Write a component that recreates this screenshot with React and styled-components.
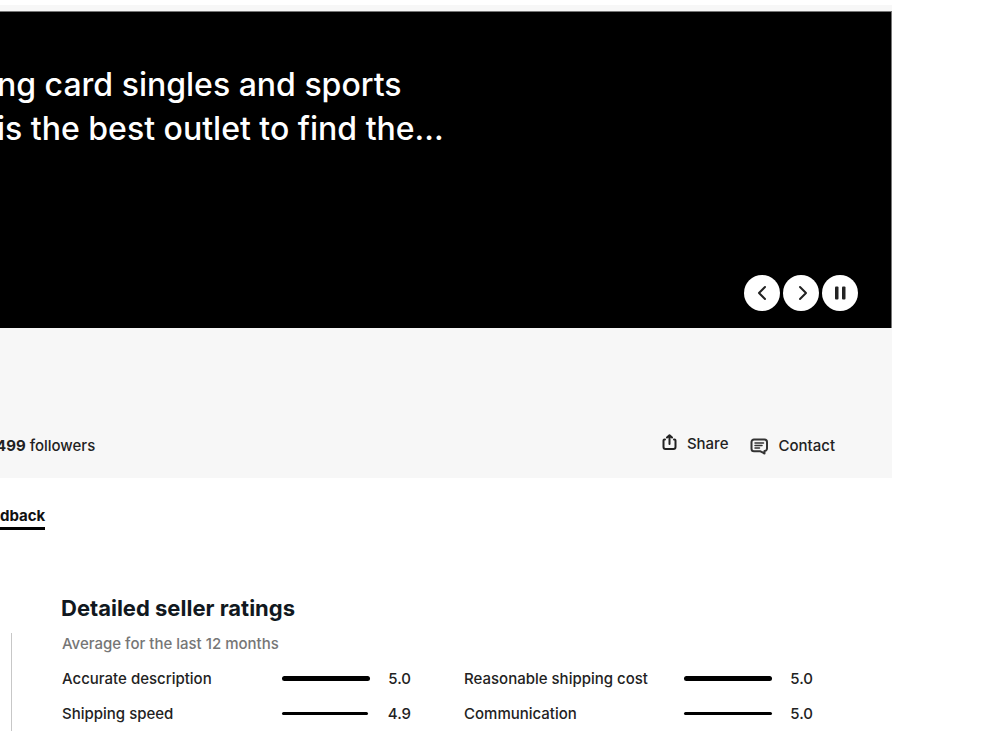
import React from "react";
import styled, { createGlobalStyle } from "styled-components";

const GlobalStyle = createGlobalStyle`
  * { box-sizing: border-box; }
  body {
    margin: 0;
    background: #fff;
    color: #222;
    font-family: Inter, "Liberation Sans", sans-serif;
    font-size: 15px;
    font-weight: 500;
    line-height: 20px;
    overflow-x: hidden;
  }
`;

const Page = styled.main`
  padding: 5px 108px 0 0;
`;

const StoreHeader = styled.header`
  background: #f7f7f7;
  padding-top: 6px;
`;

const Billboard = styled.section`
  display: flex;
  flex-direction: column;
  justify-content: space-between;
  min-height: 317px;
  padding: 51px 33px 17px 0;
  background: #000;
  border-top: 1px solid #777;
  border-right: 1px solid #777;
  color: #fff;
`;

const BillboardText = styled.p`
  margin: 0 0 0 -3px;
  font-size: 32px;
  line-height: 44px;
  white-space: nowrap;
`;

const Line = styled.span`
  display: block;
`;

const Controls = styled.div`
  display: flex;
  justify-content: flex-end;
  gap: 3px;
`;

const RoundButton = styled.button`
  display: grid;
  place-items: center;
  width: 36px;
  height: 36px;
  padding: 0;
  border: 0;
  border-radius: 50%;
  background: #fff;
  color: #222;
`;

const StoreInfo = styled.div`
  display: flex;
  justify-content: space-between;
  align-items: flex-start;
  min-height: 150px;
  padding: 106px 57px 0 0;
`;

const Followers = styled.span`
  margin-left: -4px;
  padding-top: 2px;
`;

const Actions = styled.div`
  display: flex;
  gap: 22px;
`;

const ActionButton = styled.button`
  display: flex;
  align-items: ${(p) => (p.$low ? "center" : "flex-start")};
  gap: 10px;
  padding: ${(p) => (p.$low ? "2px 0 0" : "0")};
  border: 0;
  background: none;
  color: inherit;
  font: inherit;
`;

const Tabs = styled.nav`
  display: flex;
  padding-top: 28px;
`;

const Tab = styled.a`
  padding-bottom: 1px;
  border-bottom: 3px solid #000;
  color: #111;
  font-size: 15px;
  font-weight: 700;
  text-decoration: none;
`;

const Feedback = styled.section`
  padding: 62px 0 0 61px;
`;

const Title = styled.h2`
  margin: 0;
  color: #111820;
  font-size: 22px;
  font-weight: 700;
  line-height: 32px;
`;

const Body = styled.div`
  margin: 9px 0 0 -50px;
  padding: 1px 0 0 50px;
  border-left: 1px solid #c7c7c7;
`;

const Note = styled.p`
  margin: 0;
  color: #767676;
`;

const Columns = styled.div`
  display: grid;
  grid-template-columns: 349px 349px;
  column-gap: 53px;
  padding-top: 7px;
`;

const Ratings = styled.table`
  width: 100%;
  border-collapse: collapse;
  table-layout: fixed;
`;

const Label = styled.th`
  width: 220px;
  height: 35px;
  padding: 0;
  font-weight: 500;
  text-align: left;
  white-space: nowrap;
`;

const BarCell = styled.td`
  width: 88px;
  padding: 0;
`;

const Score = styled.td`
  padding: 0;
  text-align: right;
`;

const Bar = styled.div`
  height: ${(p) => (p.$thick ? "5px" : "3px")};
  border-radius: 3px;
  background: #000;
`;

const columns = [
  [["Accurate description", 5.0], ["Shipping speed", 4.9]],
  [["Reasonable shipping cost", 5.0], ["Communication", 5.0]],
];

const Chevron = ({ d }) => (
  <svg width="18" height="18" viewBox="0 0 18 18" fill="none" stroke="currentColor" strokeWidth="2" strokeLinecap="round" strokeLinejoin="round" aria-hidden="true">
    <path d={d} />
  </svg>
);

const PauseIcon = () => (
  <svg width="18" height="18" viewBox="0 0 18 18" fill="currentColor" aria-hidden="true">
    <rect x="4" y="2.500" width="3.500" height="13" rx="1" />
    <rect x="11" y="2.500" width="3.500" height="13" rx="1" />
  </svg>
);

const ShareIcon = () => (
  <svg width="15" height="17" viewBox="0 0 15 17" fill="none" stroke="#222" strokeWidth="2" strokeLinecap="round" strokeLinejoin="round" aria-hidden="true">
    <path d="M3 5.500H2.500a1 1 0 0 0-1 1V13a2 2 0 0 0 2 2h8a2 2 0 0 0 2-2V6.500a1 1 0 0 0-1-1H12M7.500 10V1.500M5 3.500 7.500 1.200 10 3.500" />
  </svg>
);

const ContactIcon = () => (
  <svg width="18" height="17" viewBox="0 0 18 17" fill="none" stroke="#333" strokeLinecap="round" strokeLinejoin="round" aria-hidden="true">
    <path strokeWidth="2" d="M4 1.500h10.500a2.500 2.500 0 0 1 2.500 2.500v6.500a2.500 2.500 0 0 1-2.500 2.500v2.500L10.500 13.300H4A2.500 2.500 0 0 1 1.500 10.800V4A2.500 2.500 0 0 1 4 1.500Z" />
    <path strokeWidth="1.500" d="M5 5h8.500M5 7.500h7M5 10h4.500" />
  </svg>
);

export default function App() {
  return (
    <>
      <GlobalStyle />
      <Page>
        <StoreHeader>
          <Billboard>
            <BillboardText>
              <Line>ng card singles and sports</Line>
              <Line>is the best outlet to find the...</Line>
            </BillboardText>
            <Controls>
              <RoundButton type="button" aria-label="Previous"><Chevron d="M12 3 6 9l6 6" /></RoundButton>
              <RoundButton type="button" aria-label="Next"><Chevron d="M8 3l6 6-6 6" /></RoundButton>
              <RoundButton type="button" aria-label="Pause"><PauseIcon /></RoundButton>
            </Controls>
          </Billboard>
          <StoreInfo>
            <Followers><strong>499</strong> followers</Followers>
            <Actions>
              <ActionButton type="button"><ShareIcon />Share</ActionButton>
              <ActionButton type="button" $low><ContactIcon />Contact</ActionButton>
            </Actions>
          </StoreInfo>
        </StoreHeader>
        <Tabs>
          <Tab href="#feedback">dback</Tab>
        </Tabs>
        <Feedback id="feedback">
          <Title>Detailed seller ratings</Title>
          <Body>
            <Note>Average for the last 12 months</Note>
            <Columns>
              {columns.map((rows, c) => (
                <Ratings key={c}>
                  <tbody>
                    {rows.map(([label, score], r) => (
                      <tr key={label}>
                        <Label scope="row">{label}</Label>
                        <BarCell><Bar $thick={r === 0} style={{ width: `${(score / 5) * 100}%` }} /></BarCell>
                        <Score>{score.toFixed(1)}</Score>
                      </tr>
                    ))}
                  </tbody>
                </Ratings>
              ))}
            </Columns>
          </Body>
        </Feedback>
      </Page>
    </>
  );
}
